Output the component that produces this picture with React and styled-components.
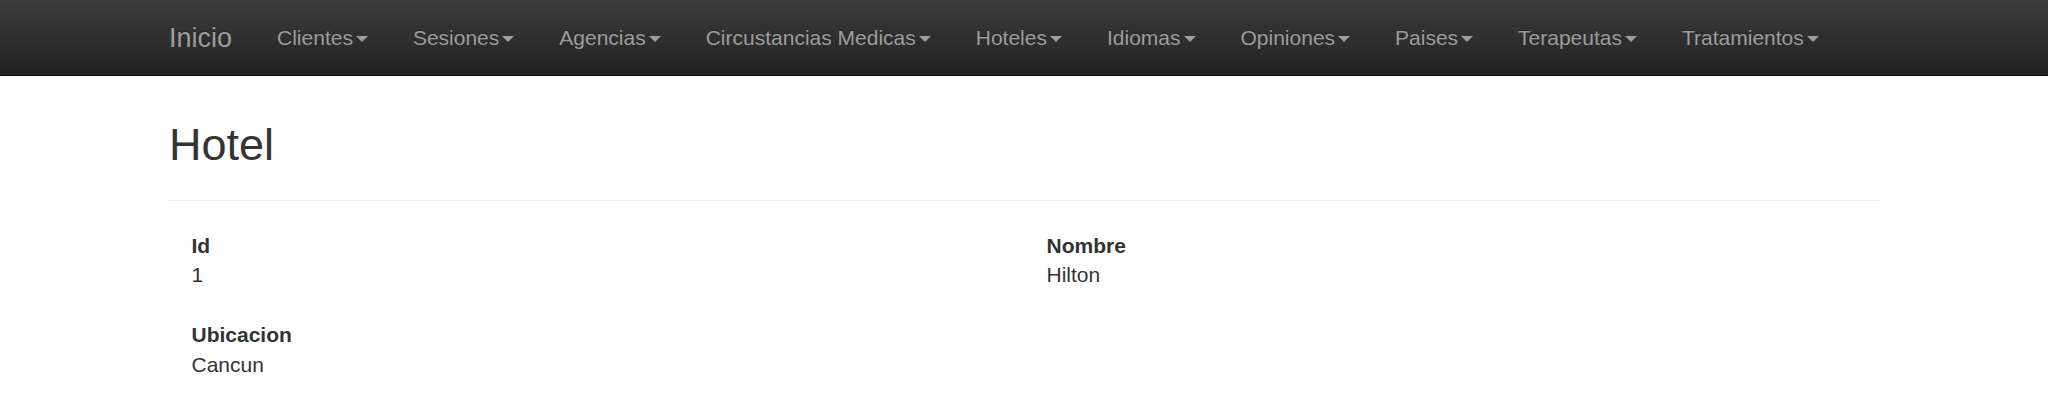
import React from "react";
import styled, { createGlobalStyle } from "styled-components";

const GlobalStyle = createGlobalStyle`
  * { box-sizing: border-box; }
  body {
    margin: 0;
    background: #fff;
    color: #333;
    font-family: "Liberation Sans", Arial, Helvetica, sans-serif;
    font-size: 21px;
    line-height: 1.42857;
  }
`;

const Navbar = styled.nav`
  background-image: linear-gradient(to bottom, #3c3c3c 0, #222 100%);
  border-bottom: 1px solid #080808;
`;

const Container = styled.div`
  width: 1755px;
  margin: 0 auto;
  padding: 0 22.5px;
`;

const NavInner = styled(Container)`
  display: flex;
  align-items: flex-start;
  height: 75px;
`;

const Brand = styled.a`
  display: block;
  margin-left: -22.5px;
  padding: 22.5px;
  height: 75px;
  font-size: 27px;
  line-height: 30px;
  color: #9d9d9d;
  text-decoration: none;
  text-shadow: 0 -1px 0 rgba(0, 0, 0, 0.25);
`;

const NavList = styled.ul`
  display: flex;
  margin: 0;
  padding: 0;
  list-style: none;
`;

const NavLink = styled.a`
  display: flex;
  align-items: center;
  padding: 22.5px;
  line-height: 30px;
  font-size: 21px;
  color: #9d9d9d;
  text-decoration: none;
  text-shadow: 0 -1px 0 rgba(0, 0, 0, 0.25);
`;

const Caret = styled.span`
  display: inline-block;
  width: 0;
  height: 0;
  margin-left: 3px;
  border-top: 6px solid #9d9d9d;
  border-left: 6px solid transparent;
  border-right: 6px solid transparent;
  position: relative;
  top: 1px;
`;

const Title = styled.h2`
  margin: 44px 0 29px;
  font-size: 45px;
  font-weight: 500;
  line-height: 1.1;
  color: #333;
`;

const Rule = styled.hr`
  margin: 30px 0;
  border: 0;
  border-top: 1px solid #eee;
`;

const Fields = styled.div`
  display: grid;
  grid-template-columns: 1fr 1fr;
  column-gap: 45px;
  padding: 0 22.5px;
`;

const Field = styled.dl`
  margin: 0 0 30px;
`;

const Label = styled.dt`
  font-weight: 700;
`;

const Value = styled.dd`
  margin: 0;
`;

const menus = [
  "Clientes",
  "Sesiones",
  "Agencias",
  "Circustancias Medicas",
  "Hoteles",
  "Idiomas",
  "Opiniones",
  "Paises",
  "Terapeutas",
  "Tratamientos",
];

const fields = [
  { label: "Id", value: "1" },
  { label: "Nombre", value: "Hilton" },
  { label: "Ubicacion", value: "Cancun" },
];

export default function App() {
  return (
    <>
      <GlobalStyle />
      <Navbar>
        <NavInner>
          <Brand href="#">Inicio</Brand>
          <NavList>
            {menus.map((m) => (
              <li key={m}>
                <NavLink href="#">
                  {m}
                  <Caret />
                </NavLink>
              </li>
            ))}
          </NavList>
        </NavInner>
      </Navbar>
      <Container>
        <Title>Hotel</Title>
        <Rule />
        <Fields>
          {fields.map((f) => (
            <Field key={f.label}>
              <Label>{f.label}</Label>
              <Value>{f.value}</Value>
            </Field>
          ))}
        </Fields>
      </Container>
    </>
  );
}
